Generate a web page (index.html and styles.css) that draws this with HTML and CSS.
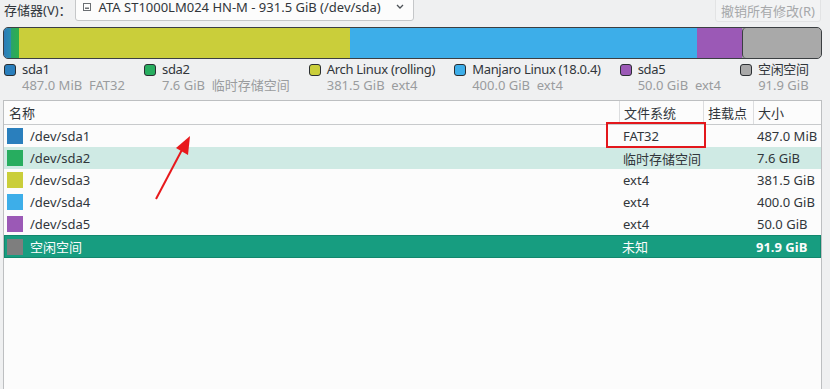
FILE: index.html
```html
<!DOCTYPE html>
<html lang="zh">
<head>
<meta charset="utf-8">
<link rel="stylesheet" href="styles.css">
</head>
<body>
<div class="app">
  <div class="toolbar">
    <span class="label">存储器(V)：</span>
    <div class="combo">
      <svg class="drive" width="8" height="8" viewBox="0 0 8 8"><rect x="0.5" y="0.5" width="7" height="7" fill="none" stroke="#6b6f73"/><rect x="2" y="4.5" width="4" height="1.5" fill="#6b6f73"/></svg>
      <span class="combo-text">ATA ST1000LM024 HN-M - 931.5 GiB (/dev/sda)</span>
      <svg class="chev" width="8" height="5" viewBox="0 0 8 5"><path d="M1 1 L4 4 L7 1" fill="none" stroke="#4d5257" stroke-width="1.3"/></svg>
    </div>
    <div class="spacer"></div>
    <div class="btn">撤销所有修改(R)</div>
  </div>

  <div class="pbar">
    <div class="used">
      <div class="seg c1" style="width:7px"></div>
      <div class="seg c2" style="width:8px"></div>
      <div class="seg c3" style="width:331px"></div>
      <div class="seg c4" style="width:347px"></div>
      <div class="seg c5" style="width:45px"></div>
    </div>
    <div class="free"></div>
  </div>

  <div class="legend">
    <div class="li"><span class="sw c1"></span><div><div class="lt">sda1</div><div class="ls">487.0 MiB&nbsp; FAT32</div></div></div>
    <div class="li"><span class="sw c2"></span><div><div class="lt">sda2</div><div class="ls">7.6 GiB&nbsp; 临时存储空间</div></div></div>
    <div class="li"><span class="sw c3"></span><div><div class="lt">Arch Linux (rolling)</div><div class="ls">381.5 GiB&nbsp; ext4</div></div></div>
    <div class="li"><span class="sw c4"></span><div><div class="lt">Manjaro Linux (18.0.4)</div><div class="ls">400.0 GiB&nbsp; ext4</div></div></div>
    <div class="li"><span class="sw c5"></span><div><div class="lt">sda5</div><div class="ls">50.0 GiB&nbsp; ext4</div></div></div>
    <div class="li"><span class="sw c6"></span><div><div class="lt">空闲空间</div><div class="ls center">91.9 GiB</div></div></div>
  </div>

  <div class="table">
    <div class="row head">
      <div class="cell name">名称</div>
      <div class="cell sep">文件系统</div>
      <div class="cell sep">挂载点</div>
      <div class="cell sep">大小</div>
    </div>
    <div class="row">
      <div class="cell name"><span class="sq c1"></span>/dev/sda1</div>
      <div class="cell">FAT32</div><div class="cell"></div><div class="cell">487.0 MiB</div>
    </div>
    <div class="row hover">
      <div class="cell name"><span class="sq c2"></span>/dev/sda2</div>
      <div class="cell">临时存储空间</div><div class="cell"></div><div class="cell">7.6 GiB</div>
    </div>
    <div class="row">
      <div class="cell name"><span class="sq c3"></span>/dev/sda3</div>
      <div class="cell">ext4</div><div class="cell"></div><div class="cell">381.5 GiB</div>
    </div>
    <div class="row">
      <div class="cell name"><span class="sq c4"></span>/dev/sda4</div>
      <div class="cell">ext4</div><div class="cell"></div><div class="cell">400.0 GiB</div>
    </div>
    <div class="row">
      <div class="cell name"><span class="sq c5"></span>/dev/sda5</div>
      <div class="cell">ext4</div><div class="cell"></div><div class="cell">50.0 GiB</div>
    </div>
    <div class="row sel">
      <div class="cell name"><span class="sq c7"></span>空闲空间</div>
      <div class="cell">未知</div><div class="cell"></div><div class="cell bold">91.9 GiB</div>
    </div>
  </div>
</div>

<div class="redbox"></div>
<svg class="arrow" width="60" height="80" viewBox="0 0 60 80">
  <line x1="10" y1="69" x2="38" y2="16" stroke="#e8191c" stroke-width="2"/>
  <polygon points="44,6 42,25 30,18" fill="#e8191c"/>
</svg>
</body>
</html>
```

FILE: styles.css
```css
* { box-sizing: border-box; }
html, body { margin: 0; padding: 0; }
body {
  width: 830px;
  height: 389px;
  overflow: hidden;
  background: #eff0f1;
  font-family: "Noto Sans", "Noto Sans CJK SC", sans-serif;
  font-size: 13px;
  color: #31363b;
  position: relative;
}
.app { display: flex; flex-direction: column; }

.toolbar {
  height: 22px;
  display: flex;
  align-items: flex-start;
  padding-left: 4px;
}
.label { line-height: 20px; margin-top: 0; }
.combo {
  margin-left: 3px;
  margin-top: -6px;
  width: 339px;
  height: 27px;
  background: #fcfcfc;
  border: 1px solid #c5c7c9;
  border-radius: 3px;
  display: flex;
  align-items: flex-end;
  padding: 0 9px 4px 7px;
}
.drive { margin-bottom: 5px; margin-right: 8px; }
.combo-text { flex: 1; line-height: 18px; white-space: nowrap; }
.chev { margin-bottom: 7px; }
.spacer { flex: 1; }
.btn {
  margin-top: -6px;
  margin-right: 9px;
  height: 28px;
  padding: 6px 5px 0 5px;
  background: #f2f3f4;
  border: 1px solid #e2e3e4;
  border-radius: 3px;
  color: #a6a8aa;
  line-height: 20px;
  white-space: nowrap;
}

.pbar {
  margin: 5px 8px 0 3px;
  height: 32px;
  display: flex;
  border: 1.5px solid #3b3f42;
  border-radius: 5px;
  overflow: hidden;
  background: #a8a8a8;
}
.used { display: flex; height: 100%; }
.seg { height: 100%; }
.free {
  flex: 1;
  background: #a9a9a9;
  border-left: 1.5px solid #3b3f42;
  border-radius: 4px;
}
.c1 { background: #2a7fbd; }
.c2 { background: #27ad5f; }
.c3 { background: #cace3a; }
.c4 { background: #3daee9; }
.c5 { background: #9b59b6; }
.c6 { background: #a9a9a9; }
.c7 { background: #7e7e7e; }
.seg.c1 { background: linear-gradient(90deg, #2c7cb8, #2a8fb0); }
.seg.c2 { background: linear-gradient(90deg, #2aa36a, #2fb04a); }

.legend {
  display: flex;
  gap: 19px;
  padding: 2px 0 0 4px;
  height: 36px;
}
.li { display: flex; align-items: flex-start; gap: 6px; }
.sw {
  width: 12px; height: 12px;
  margin-top: 3px;
  border: 1.5px solid #2b2f33;
  border-radius: 3px;
  flex: none;
}
.lt { line-height: 17px; white-space: nowrap; letter-spacing: -0.3px; }
.ls { line-height: 15px; color: #9a9c9e; white-space: nowrap; }
.ls.center { text-align: center; }

.table {
  margin: 5px 8px 0 3px;
  height: 300px;
  background: #fcfcfc;
  border: 1px solid #bdbfc1;
}
.row {
  display: grid;
  grid-template-columns: 1fr 84px 50px 68px;
  height: 22px;
  align-items: center;
}
.row.head {
  height: 24px;
  border-bottom: 1px solid #c8cacc;
  background: #fcfcfc;
}
.cell { padding-left: 4px; white-space: nowrap; display: flex; align-items: center; height: 100%; }
.row.head .name { padding-left: 5px; }
.cell.sep { border-left: 1px solid #dcdddf; }
.name { padding-left: 3px; }
.sq { width: 16px; height: 16px; margin-right: 7px; flex: none; }
.row.hover { background: #cfeae4; }
.row.sel { background: #179d80; color: #fcfcfc; height: 23px; border: 1px solid #12876d; }
.row.sel .name { padding-left: 2px; }
.bold { font-weight: bold; }

.redbox {
  position: absolute;
  left: 606px; top: 122px;
  width: 100px; height: 26px;
  border: 2px solid #e3171c;
}
.arrow {
  position: absolute;
  left: 146px; top: 130px;
}
```
